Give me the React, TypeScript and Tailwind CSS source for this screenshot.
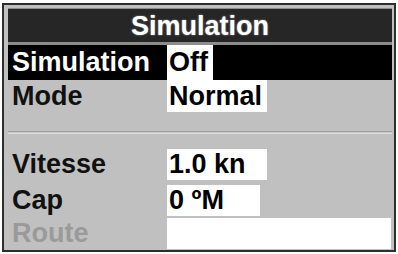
export default function App() {
  const font = "font-['Liberation_Sans',Arial,sans-serif] font-bold text-[27px] leading-none";
  return (
    <div className="h-[254px] w-[398px] bg-white pl-[2px] pt-[3px]">
      <div className={`flex h-[249px] w-[394px] flex-col border-2 border-[#2e2e2e] bg-[#c0c0c0] pl-[4px] pr-[2px] pt-[3px] ${font}`}>
        <div className="flex h-[37px] items-center justify-center border-y-[3px] border-t-[1px] border-[#8c8c8c] bg-[#262626] pt-[1px] text-white [text-shadow:0_0_2px_#9a9a9a]">
          Simulation
        </div>
        <div className="flex h-[35px] items-stretch bg-black">
          <div className="flex w-[159px] items-center pl-[4px] text-white">Simulation</div>
          <div className="flex w-[46px] items-center bg-white pl-[2px] text-black">Off</div>
        </div>
        <div className="flex h-[32px] items-stretch">
          <div className="flex w-[159px] items-center pl-[4px] text-[#111]">Mode</div>
          <div className="flex w-[100px] items-center bg-white pl-[2px] text-black">Normal</div>
        </div>
        <div className="mt-[19px] h-[3px] border-t border-b border-[#9c9c9c] border-b-[#dedede] bg-[#c8c8c8]" />
        <div className="mt-[15px] flex h-[31px] items-stretch">
          <div className="flex w-[159px] items-center pl-[4px] text-[#111]">Vitesse</div>
          <div className="flex w-[100px] items-center bg-white pl-[2px] text-black">1.0 kn</div>
        </div>
        <div className="mt-[5px] flex h-[31px] items-stretch">
          <div className="flex w-[159px] items-center pl-[4px] text-[#111]">Cap</div>
          <div className="flex w-[93px] items-center bg-white pl-[2px] text-black">0 ºM</div>
        </div>
        <div className="mt-[2px] flex h-[31px] items-stretch">
          <div className="flex w-[159px] items-center pl-[4px] text-[#9a9a9a]">Route</div>
          <div className="w-[224px] bg-white" />
        </div>
      </div>
    </div>
  );
}
